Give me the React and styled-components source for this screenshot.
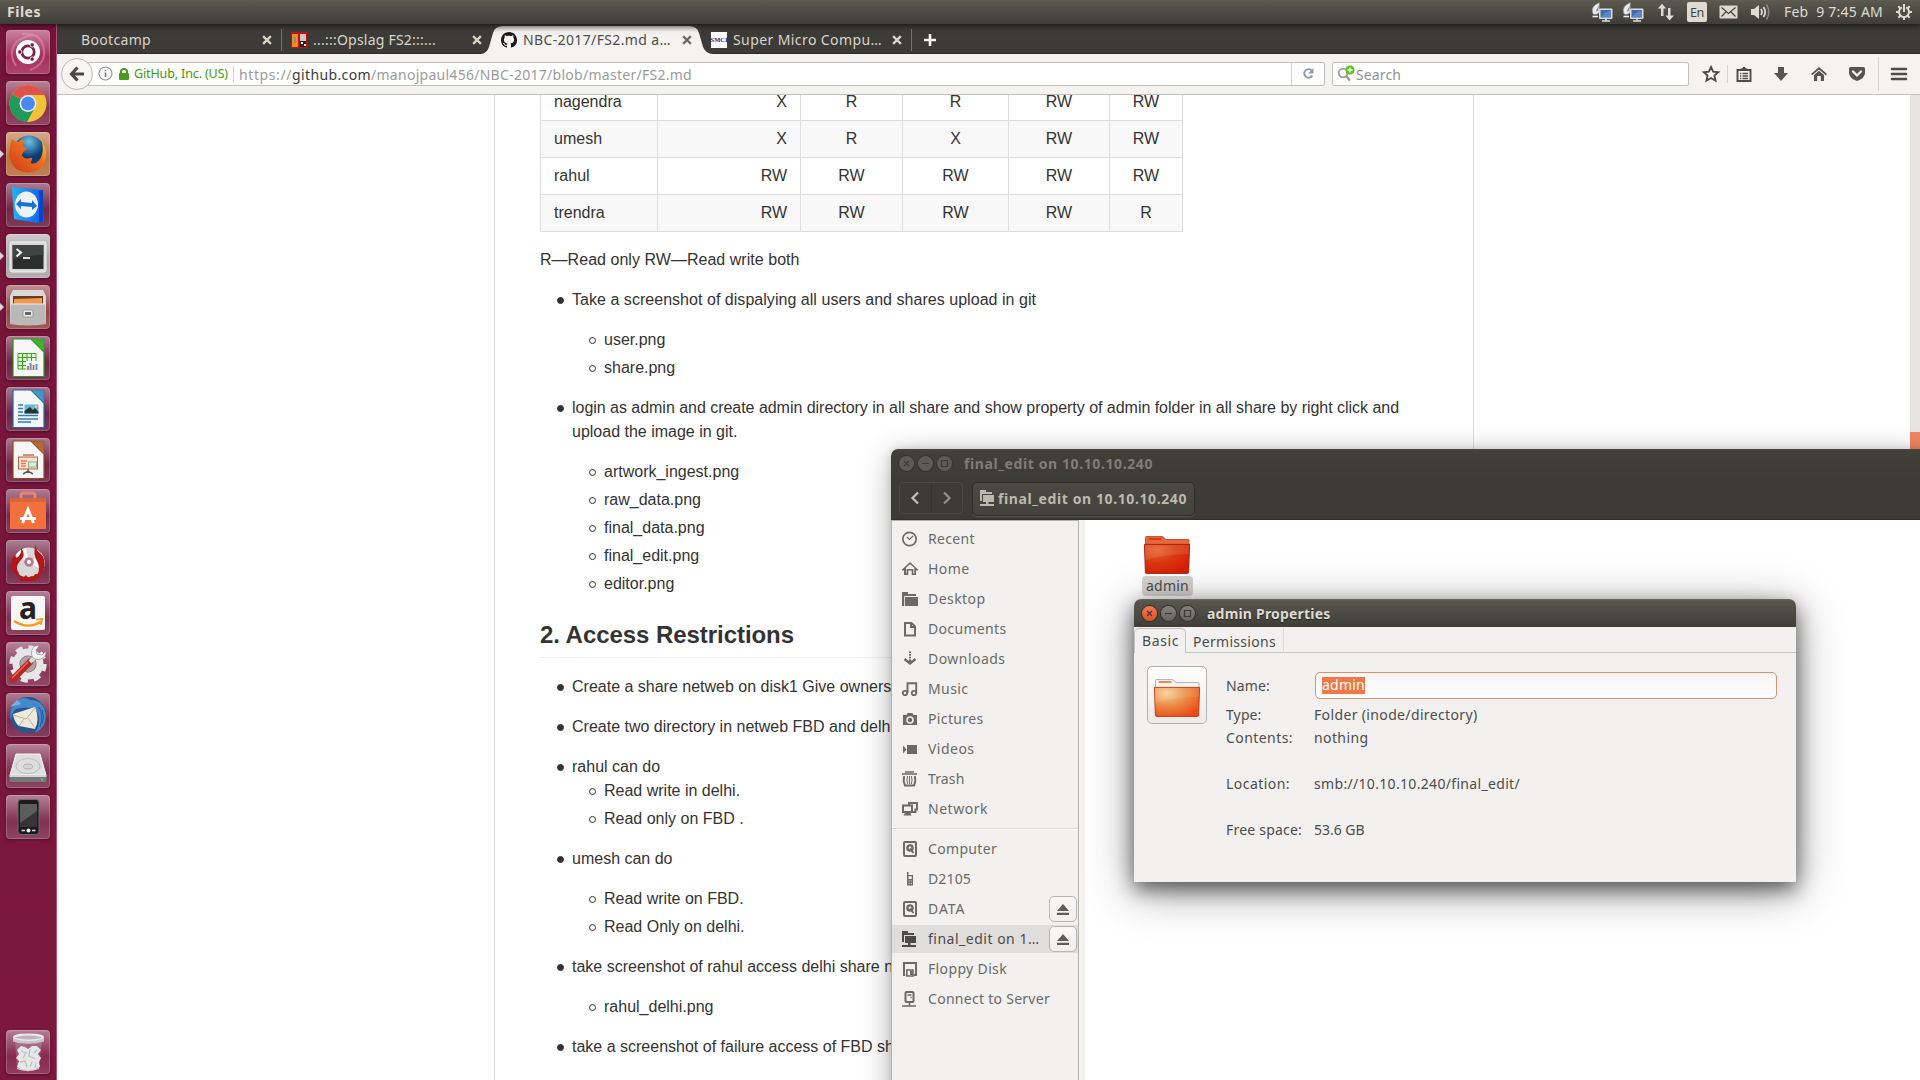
import React, { useLayoutEffect, useRef } from "react";
import styled, { createGlobalStyle, css } from "styled-components";

const ui = '"Noto Sans", "Open Sans", sans-serif';
const doc = '"Liberation Sans", Arial, sans-serif';

const Global = createGlobalStyle`
  *, *::before { box-sizing: border-box; }
  html, body { margin: 0; padding: 0; overflow: hidden; background: #fff; }
  svg { display: block; flex: none; overflow: visible; }
`;

/* Text that is tracked so that it fills a known width. */
const FitText = styled.span`
  display: inline-block;
  white-space: pre;
`;
function Fit({ w, children }) {
  const ref = useRef(null);
  useLayoutEffect(() => {
    const el = ref.current;
    el.style.letterSpacing = "0px";
    const natural = el.getBoundingClientRect().width;
    el.style.letterSpacing = `${(w - natural) / children.length}px`;
  }, [w, children]);
  return <FitText ref={ref}>{children}</FitText>;
}

const Screen = styled.div`
  position: relative;
  width: 1920px;
  height: 1080px;
  overflow: hidden;
  display: flex;
  flex-direction: column;
  font-family: ${ui};
  font-size: 14px;
`;
const Panel = styled.header`
  height: 24px;
  flex: none;
  display: flex;
  align-items: center;
  justify-content: space-between;
  padding: 0 8px 0 7px;
  color: #dfdbd2;
  background: linear-gradient(#5f5c50 0, #5a574e 2px, #3e3d38 100%);
  box-shadow: 0 1px 6px rgba(0, 0, 0, 0.75);
  z-index: 3;
`;
const AppName = styled.div`
  font-weight: 700;
  line-height: 24px;
`;
const Indicators = styled.div`
  display: flex;
  align-items: center;
`;
const Indicator = styled.div`
  width: ${(p) => p.$w}px;
  margin-right: ${(p) => p.$gap}px;
  flex: none;
  line-height: 24px;
`;
const Lang = styled.div`
  width: 20px;
  height: 20px;
  border-radius: 2px;
  background: #dfdbd2;
  color: #45443f;
  font-size: 12.5px;
  line-height: 21px;
  text-align: center;
`;
const Body = styled.div`
  display: flex;
  flex: 1;
  min-height: 0;
`;
const Launcher = styled.nav`
  width: 57px;
  flex: none;
  display: flex;
  flex-direction: column;
  gap: 7px;
  padding: 6px 0 6px 6px;
  border-right: 1px solid #b0527b;
  background: linear-gradient(#75143a, #7b183b);
`;
const Tile = styled.div`
  position: relative;
  width: 44px;
  height: 44px;
  flex: none;
  display: flex;
  align-items: center;
  justify-content: center;
  border-radius: 4px;
  margin-top: ${(p) => (p.$last ? "auto" : 0)};
  background: linear-gradient(rgba(255, 255, 255, 0.42), rgba(255, 255, 255, 0.1) 48%, rgba(255, 255, 255, 0.03) 60%, rgba(255, 255, 255, 0.12)), ${(p) => p.$bg};
  box-shadow: inset 0 0 0 1px rgba(255, 255, 255, 0.2), 0 1px 3px rgba(40, 0, 20, 0.5);
`;
const Running = styled.i`
  position: absolute;
  left: -6px;
  top: 18px;
  border: 4px solid transparent;
  border-left-color: #ddd3d8;
  border-right: 0;
`;

const Browser = styled.main`
  flex: 1;
  min-width: 0;
  display: flex;
  flex-direction: column;
  background: #fff;
`;
const TabStrip = styled.div`
  height: 30px;
  flex: none;
  display: flex;
  padding-left: 14px;
  background: #3c3b37;
  border-bottom: 1px solid #2b2a27;
`;
const Tab = styled.div`
  position: relative;
  width: 210px;
  display: flex;
  align-items: center;
  padding: 3px 9px 0 10px;
  color: ${(p) => (p.$active ? "#4c4c4c" : "#d9d5cc")};
  font-size: 14px;
`;
const TabShape = styled.svg`
  position: absolute;
  left: -10px;
  top: 2px;
`;
const TabSep = styled.i`
  position: absolute;
  right: -1px;
  top: 5px;
  width: 1px;
  height: 22px;
  background: #75736c;
`;
const TabIcon = styled.div`
  position: relative;
  width: 16px;
  height: 16px;
  margin-right: 6px;
`;
const TabTitle = styled.div`
  position: relative;
  flex: 1;
  line-height: 24px;
`;
const CloseMark = styled.svg`
  position: relative;
`;
const Smci = styled.div`
  width: 16px;
  height: 16px;
  display: flex;
  align-items: center;
  justify-content: center;
  background: #fff;
  color: #29248c;
  font: 700 6.5px/12px "Liberation Serif", serif;
  white-space: nowrap;
`;
const PlusBox = styled.div`
  padding: 10px 0 0 13px;
`;
const NavBar = styled.div`
  height: 41px;
  flex: none;
  display: flex;
  align-items: center;
  padding: 0 13px 1px 4px;
  background: #f4f3f1;
  border-bottom: 1px solid #c3c1be;
`;
const BackButton = styled.div`
  width: 32px;
  height: 32px;
  flex: none;
  display: flex;
  align-items: center;
  justify-content: center;
  border: 1px solid #bdbab6;
  border-radius: 50%;
  background: #f7f6f5;
  z-index: 1;
`;
const UrlBar = styled.div`
  height: 24px;
  width: 1237px;
  flex: none;
  margin-left: -5px;
  display: flex;
  align-items: center;
  border: 1px solid #c3c1be;
  background: #fff;
  border-radius: 0 2px 2px 0;
  padding-left: 9px;
`;
const Secure = styled.div`
  color: #45990b;
  font-size: 12.5px;
  line-height: 22px;
  padding-top: 1px;
  margin: 0 5px 0 4px;
`;
const VLine = styled.i`
  width: 1px;
  height: ${(p) => p.$h}px;
  background: #d5d3d0;
  flex: none;
`;
const Url = styled.div`
  margin-left: 5px;
  padding-top: 2px;
  flex: 1;
  line-height: 20px;
  color: #9b9b9b;
  font-size: 14px;
  b { font-weight: 400; color: #3a3a3a; }
`;
const Reload = styled.div`
  width: 33px;
  height: 22px;
  display: flex;
  align-items: center;
  justify-content: center;
  border-left: 1px solid #d5d3d0;
`;
const SearchBox = styled.div`
  width: 357px;
  height: 24px;
  flex: none;
  margin-left: 7px;
  display: flex;
  align-items: center;
  gap: 1px;
  padding-left: 4px;
  border: 1px solid #c3c1be;
  border-radius: 2px;
  background: #fff;
`;
const SearchHint = styled.div`
  padding-top: 2px;
  line-height: 20px;
  color: #929292;
`;
const NavIcons = styled.div`
  flex: 1;
  display: grid;
  grid-template-columns: 32px 1px 31px 44px 32px 43px 1px 1fr;
  align-items: center;
  justify-items: center;
  padding-left: 6px;
  & > :last-child { justify-self: end; }
`;
const PageRow = styled.div`
  flex: 1;
  min-height: 0;
  display: flex;
  justify-content: space-between;
  overflow: hidden;
`;
const Article = styled.article`
  width: 980px;
  height: 1000px;
  margin: -11px 0 0 437px;
  padding: 0 45px;
  border: solid #dddddd;
  border-width: 0 1px;
  font: 16px/24px ${doc};
  color: #333;
`;
const Scroll = styled.div`
  width: 10px;
  padding-top: 337px;
  background: #e6e5e4;
`;
const Thumb = styled.div`
  height: 200px;
  background: #f08763;
`;
const Grid = styled.div`
  width: 643px;
  border-left: 1px solid #ddd;
`;
const GridRow = styled.div`
  display: grid;
  grid-template-columns: 117px 143px 102px 106px 101px 73px;
  background: ${(p) => (p.$alt ? "#f8f8f8" : "#fff")};
`;
const Cell = styled.div`
  height: 37px;
  padding: 6px 13px 5px;
  border: solid #ddd;
  border-width: 0 1px 1px 0;
  text-align: ${(p) => p.$align};
`;
const Para = styled.p`
  margin: 16px 0;
`;
const Bullets = styled.ul`
  margin: 0;
  padding: 0 0 0 32px;
  list-style: none;
`;
const Item = styled.li`
  display: block;
  margin-top: ${(p) => p.$gap}px;
  &::before {
    content: "";
    float: left;
    width: 7px;
    height: 7px;
    margin: 9px 0 0 -15px;
    border-radius: 50%;
    border: 1px solid #333;
    ${(p) => p.$solid && css`background: #333;`}
  }
`;
const Heading = styled.h2`
  margin: 24px 0 17px;
  padding-bottom: 7px;
  font-size: 24px;
  line-height: 30px;
  border-bottom: 1px solid #eee;
`;

const FilesWindow = styled.section`
  position: absolute;
  left: 891px;
  top: 449px;
  width: 1040px;
  height: 640px;
  display: flex;
  flex-direction: column;
  border-radius: 7px 7px 0 0;
  background: #fff;
  overflow: hidden;
`;
const FilesShadow = styled.div`
  position: absolute;
  left: 891px;
  top: 449px;
  width: 1040px;
  height: 700px;
  border-radius: 7px;
  box-shadow: 0 6px 30px rgba(0, 0, 0, 0.3), 0 0 9px rgba(0, 0, 0, 0.15);
`;
const FilesHead = styled.div`
  height: 71px;
  flex: none;
  background: linear-gradient(#464640 0, #403f3a 3px, #3c3b37 30px);
  border-bottom: 1px solid #32312e;
`;
const TitleBar = styled.div`
  height: 29px;
  display: flex;
  align-items: center;
  gap: 4px;
  padding-left: 8px;
  line-height: 28px;
  font-weight: 700;
  color: ${(p) => p.$color};
`;
const WinButton = styled.div`
  width: 15px;
  height: 15px;
  border-radius: 50%;
  background: ${(p) => p.$bg};
  box-shadow: 0 0 0 1px ${(p) => p.$ring};
`;
const TitleText = styled.div`
  margin-left: 8px;
`;
const ToolRow = styled.div`
  display: flex;
  padding: 4px 0 0 8px;
  gap: 9px;
`;
const Arrows = styled.div`
  display: grid;
  grid-template-columns: 31px 31px;
  width: 64px;
  height: 32px;
  border: 1px solid #4b4a45;
  border-radius: 4px;
  & > * + * { border-left: 1px solid #34332f; }
`;
const Arrow = styled.div`
  display: flex;
  align-items: center;
  justify-content: center;
  padding-right: 1px;
`;
const PathButton = styled.div`
  width: 223px;
  height: 34px;
  display: flex;
  align-items: center;
  gap: 4px;
  padding: 0 0 2px 7px;
  border: 1px solid #2d2c29;
  border-radius: 5px;
  background: linear-gradient(#4a4944, #43423d);
  box-shadow: 0 1px 0 #55544f;
  font-weight: 700;
  color: #bdb9ad;
`;
const FilesBody = styled.div`
  flex: 1;
  display: flex;
`;
const Sidebar = styled.aside`
  width: 188px;
  border: solid #b5b2ae;
  border-width: 1px 1px 0 1px;
  background: #f2f1ef;
  padding-top: 4px;
`;
const Gutter = styled.div`
  width: 6px;
  background: #f4f3f2;
`;
const Place = styled.div`
  height: 28px;
  margin-bottom: 2px;
  display: flex;
  align-items: center;
  padding: 0 1px 0 10px;
  color: ${(p) => (p.$on ? "#4a4a4a" : "#6b6a68")};
  background: ${(p) => (p.$on ? "#e0dedd" : "transparent")};
`;
const PlaceIcon = styled.div`
  width: 26px;
`;
const PlaceName = styled.div`
  flex: 1;
  line-height: 26px;
`;
const Rule = styled.div`
  height: 2px;
  margin: 5px 0 5px;
  background: linear-gradient(#dbd9d7 50%, #fff 50%);
`;
const Eject = styled.div`
  width: 28px;
  height: 26px;
  display: flex;
  align-items: center;
  justify-content: center;
  border: 1px solid #b9b6b2;
  border-radius: 5px;
  background: linear-gradient(#f9f8f8, #f0efed);
`;
const Canvas = styled.div`
  flex: 1;
  display: flex;
  align-items: flex-start;
  padding: 16px 0 0 57px;
`;
const FileItem = styled.div`
  width: 51px;
  display: flex;
  flex-direction: column;
  align-items: center;
  & > svg { margin-right: 1px; }
`;
const FileName = styled.div`
  width: 51px;
  height: 20px;
  margin-top: 2px;
  border-radius: 4px;
  background: #d5d3d1;
  color: #4c4c4c;
  line-height: 19px;
  padding-left: 4px;
`;

const Dialog = styled.section`
  position: absolute;
  left: 1134px;
  top: 599px;
  width: 662px;
  height: 283px;
  border-radius: 7px 7px 0 0;
  background: #f2f1ef;
  color: #4c4c4c;
  box-shadow: 0 9px 48px rgba(0, 0, 0, 0.38), 0 7px 20px rgba(0, 0, 0, 0.55);
`;
const DialogTitle = styled(TitleBar)`
  height: 28px;
  border-radius: 7px 7px 0 0;
  background: linear-gradient(#6a675c 0, #59564d 2px, #3e3d38 100%);
  text-shadow: 0 1px 1px #22211f;
  & > :last-child { padding-top: 2px; }
`;
const DialogTabs = styled.div`
  display: flex;
  height: 26px;
  padding-top: 1px;
  border-bottom: 1px solid #c4c1bd;
`;
const DialogTab = styled.div`
  height: 25px;
  ${(p) => p.$on ? css`
    width: 52px;
    padding: 1px 0 0 7px;
    border: 1px solid #c4c1bd;
    border-bottom: 0;
    border-radius: 5px 5px 0 0;
    background: #f2f1ef;
    line-height: 22px;
  ` : css`
    width: 98px;
    padding: 2px 0 0 7px;
    border-right: 1px solid #dddbd8;
    line-height: 24px;
  `}
`;
const DialogBody = styled.div`
  display: flex;
  padding: 13px 19px 0 13px;
`;
const IconButton = styled.div`
  width: 60px;
  height: 58px;
  flex: none;
  display: flex;
  align-items: flex-start;
  justify-content: center;
  padding-top: 12px;
  border: 1px solid #b4b1ad;
  border-radius: 5px;
  background: linear-gradient(#fdfdfd, #ecebe9);
`;
const Fields = styled.div`
  flex: 1;
  display: grid;
  grid-template-columns: 88px 1fr;
  grid-template-rows: 27px 4px repeat(6, 23px);
  padding: 6px 0 0 19px;
  align-items: center;
  line-height: 23px;
`;
const Field = styled.div`
  grid-column: ${(p) => p.$c};
  grid-row: ${(p) => p.$r};
`;
const Entry = styled.div`
  grid-column: 2;
  grid-row: 1;
  height: 27px;
  margin-left: 1px;
  display: flex;
  align-items: center;
  padding-left: 6px;
  border: 1px solid #e0906f;
  border-radius: 5px;
  background: linear-gradient(#f5f5f5, #fff);
`;
const Selected = styled.span`
  height: 17px;
  line-height: 16px;
  background: #f07746;
  color: #fff;
`;

/* ---------- drawings ---------- */

const Cross = ({ c = "#d9d5cc" }) => (
  <CloseMark width="10" height="10" viewBox="0 0 10 10">
    <path d="M2 2L8 8M8 2L2 8" stroke={c} strokeWidth="2.4" strokeLinecap="square" />
  </CloseMark>
);

const Folder = ({ id, body, tab, edge }) => (
  <svg width="46" height="38" viewBox="0 0 46 38">
    <defs>
      <radialGradient id={id} cx=".28" cy=".2" r=".9">
        <stop offset="0" stopColor={body[0]} />
        <stop offset=".5" stopColor={body[1]} />
        <stop offset="1" stopColor={body[2]} />
      </radialGradient>
    </defs>
    <path d="M1.5 10V1.2Q1.5.5 2.2.5H18.6L22 3.5H44.5Q45 3.5 45 4V10Z" fill={tab} stroke={edge} strokeWidth=".8" />
    <rect x="4.5" y="2" width="13" height="2" rx="1" fill={body[1]} />
    <path d="M.4 8.4H45.6L44.6 36.4Q44.5 37.4 43.5 37.4H2.6Q1.5 37.4 1.4 36.4Z" fill={`url(#${id})`} stroke={body[3]} strokeWidth=".9" />
    <path d="M1 9H45L44.7 18Q18 18 1.2 24.5Z" fill="#fff" opacity=".1" />
  </svg>
);

const Dish = () => (
  <svg width="22" height="20" viewBox="0 0 22 20">
    <path d="M8.500 .500Q-.5 4 1.500 11Q3 14 8 11Z" fill="#ececec" stroke="#777" strokeWidth=".6" />
    <path d="M4.500 9.500L8 3L7 9Z" fill="#8e8e8e" />
    <path d="M1.500 14.500H7" stroke="#eee" strokeWidth="1.600" />
    <rect x="8" y="6.500" width="13.500" height="10.500" rx="1" fill="#ddd" />
    <rect x="9.500" y="8" width="10.500" height="7.500" fill="#3f6eb0" />
    <path d="M9.500 15.500Q15 9 20 8.500V15.500Z" fill="#7aa3dc" opacity=".5" />
    <path d="M11 19H19M15 17V19" stroke="#ddd" strokeWidth="1.600" />
  </svg>
);

const placeIcons = {
  Recent: <><circle cx="7.5" cy="8" r="6.7" fill="none" stroke="currentColor" strokeWidth="1.7" /><path d="M4.8 6L7.5 8.4L11 5" fill="none" stroke="currentColor" strokeWidth="1.2" /></>,
  Home: <path d="M0 8.4L8 1L16 8.4V9.4H14V14H9.7V9.5H6.3V14H2V9.4H0ZM4 12.5H4.6V8H11.4V12.5H12.3V6.8L8 3.2L4 6.8Z" fill="currentColor" fillRule="evenodd" />,
  Desktop: <path d="M0 1H6V3H14V5H2.2V15H0ZM3 6H16V15H3Z" fill="currentColor" />,
  Documents: <path d="M3 2H9.5L13 5.5V14.5H3ZM9 2V6H13" fill="none" stroke="currentColor" strokeWidth="2" />,
  Downloads: <><path d="M8 .5V8.5" stroke="currentColor" strokeWidth="2" strokeDasharray="1.6 1" /><path d="M2.5 8L8 12.5L13.5 8M8 8.5V12.5" fill="none" stroke="currentColor" strokeWidth="2.3" /></>,
  Music: <><circle cx="3" cy="12" r="2.2" fill="none" stroke="currentColor" strokeWidth="1.8" /><circle cx="12" cy="12" r="2.2" fill="none" stroke="currentColor" strokeWidth="1.8" /><path d="M5.5 12V2.2H14.2V12" fill="none" stroke="currentColor" strokeWidth="1.9" /></>,
  Pictures: <><path d="M1 4H4.5L5.5 2H10.5L11.5 4H15V14H1Z" fill="currentColor" /><circle cx="8" cy="9" r="3" fill="none" stroke="#f2f1ef" strokeWidth="1.6" /></>,
  Videos: <path d="M1 4.5L4.5 8.5L1 12.5ZM5 4H15V13H5Z" fill="currentColor" />,
  Trash: <><path d="M3 1H12M0 3H15" stroke="currentColor" strokeWidth="1.7" /><path d="M2.200 5Q.800 10 3 14.500H12Q14.200 10 12.800 5" fill="none" stroke="currentColor" strokeWidth="1.900" /><path d="M5.600 5Q4.300 9 5.600 13M7.500 5V13M9.400 5Q10.700 9 9.400 13" fill="none" stroke="currentColor" strokeWidth="1" /></>,
  Network: <><path d="M7 4V2H15V8.5H12.5M13.5 9V11H11" fill="none" stroke="currentColor" strokeWidth="1.9" /><rect x="1" y="4.5" width="9" height="6.5" fill="none" stroke="currentColor" strokeWidth="2" /><path d="M3.5 11H8L9.5 14.5H1.5Z" fill="currentColor" /></>,
  Disk: <><rect x="2" y="1" width="12" height="14" rx="1" fill="none" stroke="currentColor" strokeWidth="2" /><circle cx="8" cy="7" r="2.6" fill="none" stroke="currentColor" strokeWidth="2.400" /><path d="M8 7.500L11.500 12" stroke="currentColor" strokeWidth="2" /></>,
  Phone: <path d="M5 1H6.5V4H11V14.5H5ZM6.5 5.3V8H9.7V5.3ZM6.5 9.5H7.6V10.6H6.5ZM8.8 9.5H9.8V10.6H8.8ZM6.5 12H7.6V13H6.5ZM8.8 12H9.8V13H8.8Z" fill="currentColor" fillRule="evenodd" />,
  Share: <path d="M0 0H6V2H12V4H2V11H0ZM3 5H14V12H8.5V14H14V16H0V14H6V12H3Z" fill="currentColor" />,
  Floppy: <><path d="M3.2 14H2V2H14V14H12" fill="none" stroke="currentColor" strokeWidth="2" /><path d="M4.8 9H11V15H4.8Z" fill="none" stroke="currentColor" strokeWidth="1.6" /><path d="M8 10V14H10.5V10Z" fill="currentColor" /></>,
  Server: <><rect x="3.5" y="1" width="8" height="10" rx="1" fill="none" stroke="currentColor" strokeWidth="2" /><path d="M5.5 4H9.5M8.5 6.5H9.7M7.5 11V14.5M0 15H14" stroke="currentColor" strokeWidth="1.6" /></>,
};
const SideIcon = ({ n }) => <svg width="16" height="16" viewBox="0 0 16 16">{placeIcons[n]}</svg>;

const Art = ({ children }) => <svg width="40" height="40" viewBox="0 0 40 40">{children}</svg>;
const Office = ({ c, d, children }) => (
  <Art>
    <path d="M5 1H23L36 14V38.5H5Z" fill="#f6f6f6" stroke={d} strokeWidth="1.2" />
    <path d="M23 1H36V14Z" fill={c} stroke={d} strokeWidth=".5" />
    {children}
  </Art>
);

const apps = [
  { bg: "#a32a56", art: (
    <Art>
      <path d="M8 34Q-2 18 12 7M14 2Q34 0 36 18Q38 32 22 38M30 4Q20 2 12 8" fill="none" stroke="#e8a5bf" strokeWidth="2" opacity=".45" />
      <circle cx="20" cy="20" r="12" fill="#fff" />
      <circle cx="20" cy="20" r="6.2" fill="none" stroke="#7b1f3f" strokeWidth="2.8" />
      <g fill="#7b1f3f" stroke="#fff" strokeWidth=".8"><circle cx="11.8" cy="20" r="2.2" /><circle cx="24.2" cy="12.9" r="2.2" /><circle cx="24.2" cy="27.1" r="2.2" /></g>
    </Art>) },
  { bg: "#872a4c", art: (
    <Art>
      <circle cx="20" cy="20.5" r="18.5" fill="#f3c13a" />
      <path d="M20 20.5L4 11.2A18.5 18.5 0 0 1 36.5 12H20Z" fill="#dd5349" />
      <path d="M20 20.5L4 11.2A18.5 18.5 0 0 0 19 39L27 24.5Z" fill="#209a58" />
      <circle cx="20" cy="20.5" r="8.5" fill="#eef" /><circle cx="20" cy="20.5" r="6.9" fill="#4a89ee" />
    </Art>) },
  { bg: "#b9703c", run: true, art: (
    <Art>
      <defs>
        <radialGradient id="ffb" cx=".5" cy=".2"><stop offset="0" stopColor="#6fc3e8" /><stop offset="1" stopColor="#0d3b73" /></radialGradient>
        <linearGradient id="fff" x1="0" y1="1" x2="1" y2="0"><stop offset="0" stopColor="#cf3918" /><stop offset=".6" stopColor="#ec6d1e" /><stop offset="1" stopColor="#ffd83a" /></linearGradient>
      </defs>
      <circle cx="21" cy="17" r="15.5" fill="url(#ffb)" />
      <path d="M4 5Q7 8 10 8Q14 5 17 6Q14 9 15 12L19 15Q15 17 14 21Q16 26 22 24Q25 23 24 26Q20 31 28 29Q37 23 34 8Q40 17 37 27Q32 39 19 38.5Q4 37 1.5 22Q1 13 4 5Z" fill="url(#fff)" />
    </Art>) },
  { bg: "#6e2040", art: (
    <Art>
      <defs><linearGradient id="tv"><stop offset="0" stopColor="#25b3f8" /><stop offset="1" stopColor="#0b5ce8" /></linearGradient></defs>
      <path d="M4 2L34 5L36 37L30 38L6 34Z" fill="url(#tv)" /><path d="M31 6L35 5V36L31 38Z" fill="#0a43c8" />
      <ellipse cx="18.5" cy="19.5" rx="11.5" ry="13" fill="#eef2f7" />
      <path d="M8 19L13 14V17L24 18V15L29 21L24 25V22L13 21V24Z" fill="#1673d6" />
    </Art>) },
  { bg: "#a9a2a5", run: true, art: (
    <Art>
      <rect x="2" y="6" width="36" height="30" rx="2" fill="#d8d8d6" stroke="#f5f5f5" />
      <rect x="4.5" y="9" width="31" height="24" fill="#2c2e2d" /><path d="M4.5 9H35.5V19Q22 19 4.5 23Z" fill="#555" opacity=".55" />
      <path d="M8.5 13L13 16.5L8.5 20.5" fill="none" stroke="#f3f3f3" strokeWidth="2" /><path d="M15 22H22" stroke="#f3f3f3" strokeWidth="1.8" />
    </Art>) },
  { bg: "#934045", run: true, art: (
    <Art>
      <path d="M5 3H35L38 9V35H2V9Z" fill="#d9d9d7" /><rect x="5" y="9" width="30" height="8" fill="#6b3a20" />
      <path d="M6 12L34 11V17H6Z" fill="#f09a4c" />
      <path d="M3 17H37L38 37Q20 40 2 37Z" fill="#b9b9b7" /><path d="M3 17H37" stroke="#eee" />
      <rect x="15" y="23" width="10" height="7" rx="1.5" fill="#e9e9e9" stroke="#888" strokeWidth=".8" /><rect x="17" y="25" width="6" height="3" fill="#666" />
    </Art>) },
  { bg: "#6d1b40", art: (
    <Office c="#43b02a" d="#1c9a1c"><path d="M10 15.5H28V31H10ZM10 19.5H28M10 23.5H28M10 27.5H28M14.5 15.5V31M19 15.5V31M23.5 15.5V31" fill="#e8f7e2" stroke="#35a81f" /><rect x="18" y="23" width="12" height="9" fill="#fff" /><path d="M20 32V28M25.500 32V27" stroke="#d8745a" strokeWidth="2" /><path d="M22.6 32V25M28.5 32V26" stroke="#4a9bd0" strokeWidth="2" /></Office>) },
  { bg: "#6d1b40", art: (
    <Office c="#4793c8" d="#1a6aa3"><path d="M10 16H15M10 19.5H15M10 23H15M10 26.5H30M10 30H30M10 33H23" stroke="#2c7eb8" strokeWidth="1.5" /><rect x="16.5" y="15.5" width="14" height="9" fill="#6ab2e0" /><path d="M16.5 24.5V22L22 18L25 21L27 19L30.500 23V24.5Z" fill="#26352a" /><circle cx="28" cy="17.500" r="1.200" fill="#ffd75a" /></Office>) },
  { bg: "#6d1b40", art: (
    <Office c="#b3673b" d="#90491f"><path d="M15 15H26" stroke="#b7532b" strokeWidth="1.2" /><rect x="10.500" y="17" width="19" height="12" fill="#fae1d6" stroke="#bd5d38" /><path d="M13 21H19M13 23.500H18M13 26H18" stroke="#d9835f" strokeWidth="1.300" /><rect x="20.500" y="22" width="8" height="5" fill="#d9f2dc" stroke="#5c9a60" strokeWidth=".7" /><path d="M20 29V33M15 34L20 31L25 34" fill="none" stroke="#66564d" strokeWidth="1.500" /></Office>) },
  { bg: "#742347", art: (
    <Art>
      <path d="M13 9V4Q13 2 16 2H24Q27 2 27 4V9" fill="none" stroke="#e8836a" strokeWidth="3" />
      <path d="M2 7H38V12H2Z" fill="#d7643a" /><path d="M2 11H38V37Q38 38 37 38H3Q2 38 2 37Z" fill="#f2703a" />
      <path d="M14.500 32L20 18.500L25.500 32M12 27.500H28" fill="none" stroke="#fff" strokeWidth="3" />
    </Art>) },
  { bg: "#742347", art: (
    <Art>
      <circle cx="21" cy="21" r="15.500" fill="#d9d7d8" /><path d="M21 21L33 11A15.500 15.500 0 0 1 35 28ZM21 21L8 13A15.500 15.500 0 0 1 18 6Z" fill="#f7f7f7" />
      <circle cx="21" cy="20" r="4.800" fill="#b67b91" /><circle cx="21" cy="20" r="2" fill="#fff" />
      <path d="M13 6Q19 13 12 19Q7 25 10 30Q11 34 14 35Q4 33 3 24Q3 16 7 13Q8 17 10 15Q14 11 13 6ZM28 2Q27 8 33 12Q38 17 36 26Q34 34 27 37Q33 29 30 21Q24 12 28 2ZM10 29Q11 34 14 34Q16 36 18 33Q20 37 23 34Q26 35 27 32Q31 33 34 26Q34 35 27 39H14Q9 36 10 29Z" fill="#b31616" />
    </Art>) },
  { bg: "#7d2a4c", art: (
    <Art>
      <rect x="3" y="3" width="34" height="34" rx="2" fill="#f7f7f7" />
      <text x="20" y="25.500" textAnchor="middle" fontFamily="Noto Sans, sans-serif" fontWeight="700" fontSize="30" fill="#222">a</text>
      <path d="M6 28Q20 37 33 28.500" fill="none" stroke="#f79a1c" strokeWidth="2.200" /><path d="M28 26.500L34.500 26L32.500 32" fill="none" stroke="#f79a1c" strokeWidth="1.600" />
    </Art>) },
  { bg: "#82304f", art: (
    <Art>
      <circle cx="20" cy="20" r="12" fill="none" stroke="#e6e6e6" strokeWidth="7" /><circle cx="20" cy="20" r="16.500" fill="none" stroke="#e6e6e6" strokeWidth="4.500" strokeDasharray="7 5.960" />
      <circle cx="20" cy="20" r="8" fill="#a8a3a5" />
      <path d="M4.500 35.500L22 18" stroke="#b92520" strokeWidth="6.500" strokeLinecap="round" /><path d="M4 34L20 18" stroke="#ea6b5d" strokeWidth="1.500" />
      <path d="M22 18L29 11" stroke="#dcdcdc" strokeWidth="4" />
      <path d="M27 2Q22 6 24 12Q27 17 33 15Q38 13 38 7L34 11L29 10L28 6L31 2Q29 1 27 2Z" fill="#f2f2f2" stroke="#888" strokeWidth=".6" />
    </Art>) },
  { bg: "#742347", art: (
    <Art>
      <circle cx="20" cy="20" r="18" fill="#28558f" /><path d="M10 5Q17 1 22 5Q36 5 38 20Q38 33 27 38Q34 27 29 16Q20 10 8 14Q3 18 3 26Q0 12 10 5Z" fill="#4389cc" />
      <path d="M31 12Q36 20 32 32M34 15Q37 22 34 29" fill="none" stroke="#235a98" strokeWidth="1" />
      <path d="M5 19L27 12Q32 24 27 34L11 31Q6 27 5 19Z" fill="#eee9dc" /><path d="M5 20L18 24L27 13M11 31L16 24M27 33L20 23" fill="none" stroke="#b3ac98" strokeWidth=".9" /><path d="M9 5L2 12L13 9Z" fill="#7fb2e2" />
    </Art>) },
  { bg: "#7d2a4c", art: (
    <Art>
      <path d="M8 8H32L38 29H2Z" fill="#dededc" stroke="#f5f5f5" /><path d="M1.500 29H38.500V36H1.500Z" fill="#77787a" /><path d="M1.500 29H38.500V31H1.500Z" fill="#d6d6d6" />
      <ellipse cx="20" cy="20" rx="12" ry="7.500" fill="none" stroke="#bbb" /><ellipse cx="20" cy="20.500" rx="4.500" ry="2.500" fill="#d4d4d4" stroke="#a5a5a5" strokeWidth=".8" /><circle cx="34" cy="33.500" r="1" fill="#6be05a" />
    </Art>) },
  { bg: "#7d2a4c", art: (
    <Art>
      <rect x="10" y="2.500" width="21" height="35" rx="3" fill="#1b1b1b" stroke="#6a6a6a" /><rect x="12" y="7" width="17" height="23" fill="#353535" /><path d="M12 7H29V14L12 26Z" fill="#5c5c5c" />
      <circle cx="20.500" cy="33.500" r="2" fill="#eee" /><path d="M13.500 33.500H17M24 33.500H27.500" stroke="#ddd" strokeWidth="1.500" />
    </Art>) },
];
const trash = (
  <Art>
    <path d="M7 9L9 37Q20 41 31 37L34 9Z" fill="#fff" opacity=".16" />
    <path d="M9 18L13 14L17 15L20 17L24 14L29 14L33 18L30 22L33 26L31 30L32 35L26 38L14 38L9 35L11 29L8 26L11 22Z" fill="#e4e7e6" />
    <path d="M13 19L18 21L15 26M22 17L21 24L27 27M29 18L26 21M12 30L17 29L19 35M24 30L22 35M28 31L27 36" fill="none" stroke="#bcc1c0" strokeWidth="1.300" />
    <ellipse cx="20.500" cy="5.500" rx="14.500" ry="3" fill="#bdb3b8" stroke="#e9e9e9" strokeWidth="2.200" /><path d="M5 6.500V9.500Q20.500 14 36 9.500V6.500Q20.500 11.500 5 6.500Z" fill="#c6c6c6" />
    <path d="M9 36.500Q20 40.500 31 36.500" fill="none" stroke="#cfcfcf" strokeWidth="1.300" />
  </Art>
);

const table = [
  ["nagendra", "X", "R", "R", "RW", "RW"],
  ["umesh", "X", "R", "X", "RW", "RW"],
  ["rahul", "RW", "RW", "RW", "RW", "RW"],
  ["trendra", "RW", "RW", "RW", "RW", "R"],
];
const aligns = ["left", "right", "center", "center", "center", "center"];

const SubList = ({ items, gap = 16 }) => (
  <Bullets>
    {items.map((t, i) => <Item key={t} $gap={i ? 4 : gap}>{t}</Item>)}
  </Bullets>
);

const placesTop = [["Recent", 47], ["Home", 41.5], ["Desktop", 57.5], ["Documents", 78.5], ["Downloads", 77.5], ["Music", 40.5], ["Pictures", 55.5], ["Videos", 46.5], ["Trash", 36.5], ["Network", 60]];
const placesBottom = [
  { n: "Computer", i: "Disk", w: 69 },
  { n: "D2105", i: "Phone", w: 43 },
  { n: "DATA", i: "Disk", w: 37.5, eject: true },
  { n: "final_edit on 1…", i: "Share", w: 111.5, eject: true, on: true },
  { n: "Floppy Disk", i: "Floppy", w: 79 },
  { n: "Connect to Server", i: "Server", w: 122 },
];
const fields = [
  ["Type:", 35.5, "Folder (inode/directory)", 163.5, 3],
  ["Contents:", 67, "nothing", 54.5, 4],
  ["Location:", 64, "smb://10.10.10.240/final_edit/", 206, 6],
  ["Free space:", 76, "53.6 GB", 50.5, 8],
];

const WinButtons = ({ active }) => {
  const ink = active ? "#3a3935" : "#3c3b37";
  const glyphs = ["M5 5L10 10M10 5L5 10", "M4 7.5H11", "M4.500 4.500H10.500V10.500H4.500Z"];
  return glyphs.map((d, i) => (
    <WinButton
      key={d}
      $bg={!active ? "#5d5b55" : i === 0 ? "linear-gradient(#f47b53,#dd4f24)" : "linear-gradient(#86847c,#65635c)"}
      $ring={active ? "#33322e" : "#363531"}
    >
      <svg width="15" height="15" viewBox="0 0 15 15"><path d={d} fill="none" stroke={ink} strokeWidth="1.200" /></svg>
    </WinButton>
  ));
};

export default function App() {
  return (
    <Screen>
      <Global />
      <Panel>
        <AppName><Fit w={34}>Files</Fit></AppName>
        <Indicators>
          <Indicator $w={22} $gap={9}><Dish /></Indicator>
          <Indicator $w={22} $gap={13}><Dish /></Indicator>
          <Indicator $w={18} $gap={12}>
            <svg width="18" height="18" viewBox="0 0 18 18"><path d="M4 13V5.500H.800L5 .800L9.200 5.500H6.500V13ZM11 5H13.500V12.500H17L12.500 17.500L8.500 12.500H11Z" fill="#dfdbd2" /></svg>
          </Indicator>
          <Indicator $w={20} $gap={12}><Lang><Fit w={14}>En</Fit></Lang></Indicator>
          <Indicator $w={19} $gap={13}>
            <svg width="19" height="14" viewBox="0 0 19 14"><rect x=".5" y=".5" width="18" height="13" rx="1" fill="#dfdbd2" /><path d="M2.500 2.500L9.500 8.500L16.500 2.500M2.500 11.500L7 7M16.500 11.500L12 7" fill="none" stroke="#45443f" strokeWidth="1.200" /></svg>
          </Indicator>
          <Indicator $w={20} $gap={13}>
            <svg width="20" height="18" viewBox="0 0 20 18"><path d="M0 6H3L8 2V16L3 12H0Z" fill="#dfdbd2" /><path d="M10 6Q12 9 10 12M12.500 4Q16 9 12.500 14" fill="none" stroke="#dfdbd2" strokeWidth="1.700" /><path d="M15.500 1.500Q20 9 15.500 16.500" fill="none" stroke="#8b887f" strokeWidth="1.500" /></svg>
          </Indicator>
          <Indicator $w={99} $gap={13}><Fit w={99}>Feb  9 7:45 AM</Fit></Indicator>
          <Indicator $w={16} $gap={0}>
            <svg width="16" height="16" viewBox="0 0 16 16"><path d="M6 3.400A5 5 0 1 0 10 3.400M8 0V8" fill="none" stroke="#dfdbd2" strokeWidth="2" /><path d="M0 8H3M13 8H16M2.300 2.300L4.400 4.400M13.700 2.300L11.600 4.400M2.300 13.700L4.400 11.600M13.700 13.700L11.600 11.600M8 13V16" stroke="#dfdbd2" strokeWidth="2" /></svg>
          </Indicator>
        </Indicators>
      </Panel>

      <Body>
        <Launcher>
          {apps.map((a, i) => (
            <Tile key={i} $bg={a.bg}>{a.run && <Running />}{a.art}</Tile>
          ))}
          <Tile $bg="#82234a" $last>{trash}</Tile>
        </Launcher>

        <Browser>
          <TabStrip>
            <Tab><TabTitle><Fit w={70}>Bootcamp</Fit></TabTitle><Cross /><TabSep /></Tab>
            <Tab>
              <TabIcon>
                <svg width="16" height="16" viewBox="0 0 16 16"><rect width="16" height="16" fill="#c50f0f" /><rect x="1" y="2" width="6" height="13" fill="#f58a1f" /><rect x="3" y="5" width="2" height="6" fill="#8c8c8c" /><rect x="9" y="2" width="6" height="7" fill="#c9c9c9" /><rect x="9" y="9" width="6" height="6" fill="#222" /><path d="M10 10H12V12H10ZM13 12H15V14H13Z" fill="#eee" /></svg>
              </TabIcon>
              <TabTitle><Fit w={123}>...:::Opslag FS2:::...</Fit></TabTitle><Cross />
            </Tab>
            <Tab $active>
              <TabShape width="238" height="28" viewBox="0 0 238 28">
                <defs><linearGradient id="tabg" x1="0" y1="0" x2="0" y2="1"><stop offset="0" stopColor="#bdbcb9" /><stop offset=".2" stopColor="#efeeec" /><stop offset=".4" stopColor="#f4f3f1" /></linearGradient></defs>
                <path d="M0 28Q6 27 8 21L12 7Q14 0 22 0H208Q216 0 218 7L222 21Q225 28 232 28Z" fill="url(#tabg)" />
              </TabShape>
              <TabIcon>
                <svg width="16" height="16" viewBox="0 0 16 16"><path fill="#1b1817" d="M8 0C3.580 0 0 3.580 0 8c0 3.540 2.290 6.530 5.470 7.590.4.070.55-.17.55-.38 0-.19-.01-.82-.01-1.490-2.010.37-2.530-.49-2.690-.94-.09-.23-.48-.94-.82-1.130-.28-.15-.68-.52-.01-.53.63-.01 1.080.58 1.230.82.72 1.210 1.870.87 2.330.66.07-.52.28-.87.51-1.070-1.780-.2-3.640-.89-3.640-3.950 0-.87.31-1.590.82-2.150-.08-.2-.36-1.020.08-2.120 0 0 .67-.21 2.200.82.64-.18 1.320-.27 2-.27s1.360.09 2 .27c1.530-1.040 2.200-.82 2.200-.82.44 1.100.16 1.920.08 2.120.51.56.82 1.270.82 2.150 0 3.070-1.870 3.750-3.650 3.950.29.25.54.73.54 1.480 0 1.070-.01 1.930-.01 2.200 0 .21.15.46.55.38A8.010 8.010 0 0 0 16 8c0-4.420-3.580-8-8-8z" /></svg>
              </TabIcon>
              <TabTitle><Fit w={148}>NBC-2017/FS2.md a…</Fit></TabTitle><Cross c="#6b6b69" />
            </Tab>
            <Tab>
              <TabIcon><Smci>SMCI</Smci></TabIcon>
              <TabTitle><Fit w={149}>Super Micro Compu…</Fit></TabTitle><Cross /><TabSep />
            </Tab>
            <PlusBox><svg width="12" height="12" viewBox="0 0 12 12"><path d="M6 0V12M0 6H12" stroke="#f4f3f1" strokeWidth="2.600" /></svg></PlusBox>
          </TabStrip>
          <NavBar>
            <BackButton><svg width="16" height="16" viewBox="0 0 16 16"><path d="M8.500 1.500L2.500 8L8.500 14.500M3 8H15" fill="none" stroke="#4a4a48" strokeWidth="3.200" /></svg></BackButton>
            <UrlBar>
              <svg width="15" height="15" viewBox="0 0 15 15"><circle cx="7.500" cy="7.500" r="6.500" fill="none" stroke="#8f8f8f" strokeWidth="1.100" /><path d="M7.500 6.500V11M7.500 3.700V5.200" stroke="#777" strokeWidth="1.600" /></svg>
              <svg width="17" height="14" viewBox="0 0 17 14"><rect x="6" y="6" width="10" height="7" rx="1" fill="#4a9a22" /><path d="M8 7V4.500Q8 2 11 2Q14 2 14 4.500V7" fill="none" stroke="#4a9a22" strokeWidth="2" /></svg>
              <Secure><Fit w={94}>GitHub, Inc. (US)</Fit></Secure>
              <VLine $h={16} />
              <Url><Fit w={53}>https://</Fit><b><Fit w={79}>github.com</Fit></b><Fit w={321}>/manojpaul456/NBC-2017/blob/master/FS2.md</Fit></Url>
              <Reload><svg width="14" height="14" viewBox="0 0 14 14"><path d="M11 3.800A4.300 4.300 0 1 0 11.300 8.500" fill="none" stroke="#8c9bab" strokeWidth="1.900" /><path d="M12.500 1V6.500H7Z" fill="#8c9bab" /></svg></Reload>
            </UrlBar>
            <SearchBox>
              <svg width="18" height="18" viewBox="0 0 18 18"><circle cx="6" cy="8" r="4.300" fill="none" stroke="#999" strokeWidth="1.800" /><path d="M9 11L13 15.500" stroke="#999" strokeWidth="2.400" /><circle cx="13" cy="5" r="4.600" fill="#5fbf1b" /><path d="M13 2.500V7.500M10.500 5H15.500" stroke="#fff" strokeWidth="1.300" /></svg>
              <SearchHint><Fit w={45}>Search</Fit></SearchHint>
            </SearchBox>
            <NavIcons>
              <svg width="18" height="18" viewBox="0 0 18 18"><path d="M9 2L11.100 6.700L16.200 7.200L12.400 10.600L13.500 15.600L9 13L4.500 15.600L5.600 10.600L1.800 7.200L6.900 6.700Z" fill="#fff" stroke="#4c4c4a" strokeWidth="1.900" /></svg>
              <VLine $h={18} />
              <svg width="16" height="16" viewBox="0 0 16 16"><path d="M1.500 4H14.500V15H1.500Z" fill="#f4f3f1" stroke="#4c4c4a" strokeWidth="1.900" /><path d="M4.500 4.500V3H6Q8-.5 10 3H11.500V4.500Z" fill="#4c4c4a" stroke="#4c4c4a" /><path d="M4 7.500H5.300M6.500 7.500H12M4 10H5.300M6.500 10H12M4 12.500H5.300M6.500 12.500H12" stroke="#4c4c4a" strokeWidth="1.300" /></svg>
              <svg width="16" height="16" viewBox="0 0 16 16"><path d="M5 1H11V7H15L8 15L1 7H5Z" fill="#555553" /></svg>
              <svg width="16" height="16" viewBox="0 0 16 16"><path d="M0 8L8 1L16 8L14.800 9.300L8 3.500L1.200 9.300ZM3 9L8 4.700L13 9V15H9.800V10H6.200V15H3Z" fill="#555553" /></svg>
              <svg width="16" height="16" viewBox="0 0 16 16"><path d="M1.500 1H14.500Q16 1 16 2.500V7Q16 12 8 15Q0 12 0 7V2.500Q0 1 1.500 1Z" fill="#555553" /><path d="M4 5.500L8 9.500L12 5.500" fill="none" stroke="#f4f3f1" strokeWidth="2.200" strokeLinecap="round" /></svg>
              <VLine $h={34} />
              <svg width="16" height="14" viewBox="0 0 16 14"><path d="M1 2H15M1 7H15M1 12H15" stroke="#4c4c4a" strokeWidth="2.600" strokeLinecap="round" /></svg>
            </NavIcons>
          </NavBar>
          <PageRow>
            <Article>
              <Grid>
                {table.map((r, i) => (
                  <GridRow key={r[0]} $alt={i % 2 === 1}>
                    {r.map((c, j) => <Cell key={j} $align={aligns[j]}>{c}</Cell>)}
                  </GridRow>
                ))}
              </Grid>
              <Para><Fit w={259.5}>R—Read only RW—Read write both</Fit></Para>
              <Bullets>
                <Item $solid $gap={0}><Fit w={464}>Take a screenshot of dispalying all users and shares upload in git</Fit>
                  <SubList items={["user.png", "share.png"]} />
                </Item>
                <Item $solid $gap={16}><Fit w={827}>login as admin and create admin directory in all share and show property of admin folder in all share by right click and</Fit><br />upload the image in git.
                  <SubList items={["artwork_ingest.png", "raw_data.png", "final_data.png", "final_edit.png", "editor.png"]} />
                </Item>
              </Bullets>
              <Heading><Fit w={254}>2. Access Restrictions</Fit></Heading>
              <Bullets>
                <Item $solid $gap={0}>Create a share netweb on disk1 Give ownership</Item>
                <Item $solid $gap={16}>Create two directory in netweb FBD and delhi</Item>
                <Item $solid $gap={16}>rahul can do<SubList gap={0} items={["Read write in delhi.", "Read only on FBD ."]} /></Item>
                <Item $solid $gap={16}>umesh can do<SubList items={["Read write on FBD.", "Read Only on delhi."]} /></Item>
                <Item $solid $gap={16}>take screenshot of rahul access delhi share n<SubList items={["rahul_delhi.png"]} /></Item>
                <Item $solid $gap={16}>take a screenshot of failure access of FBD sh</Item>
              </Bullets>
            </Article>
            <Scroll><Thumb /></Scroll>
          </PageRow>
        </Browser>
      </Body>

      <FilesShadow />
      <FilesWindow>
        <FilesHead>
          <TitleBar $color="#807d76"><WinButtons /><TitleText><Fit w={189}>final_edit on 10.10.10.240</Fit></TitleText></TitleBar>
          <ToolRow>
            <Arrows>
              <Arrow><svg width="10" height="14" viewBox="0 0 10 14"><path d="M8 1.500L2.500 7L8 12.500" fill="none" stroke="#c4c0b4" strokeWidth="2.200" /></svg></Arrow>
              <Arrow><svg width="10" height="14" viewBox="0 0 10 14"><path d="M2 1.500L7.500 7L2 12.500" fill="none" stroke="#918e85" strokeWidth="2.200" /></svg></Arrow>
            </Arrows>
            <PathButton>
              <svg width="14" height="16" viewBox="0 0 14 16">{placeIcons.Share}</svg>
              <Fit w={189}>final_edit on 10.10.10.240</Fit>
            </PathButton>
          </ToolRow>
        </FilesHead>
        <FilesBody>
          <Sidebar>
            {placesTop.map(([n, w]) => (
              <Place key={n}><PlaceIcon><SideIcon n={n} /></PlaceIcon><PlaceName><Fit w={w}>{n}</Fit></PlaceName></Place>
            ))}
            <Rule />
            {placesBottom.map((p) => (
              <Place key={p.n} $on={p.on}>
                <PlaceIcon><SideIcon n={p.i} /></PlaceIcon>
                <PlaceName><Fit w={p.w}>{p.n}</Fit></PlaceName>
                {p.eject && <Eject><svg width="12" height="11" viewBox="0 0 12 11"><path d="M6 0L12 7H0ZM0 8.800H12V11H0Z" fill="#5e5d5b" /></svg></Eject>}
              </Place>
            ))}
          </Sidebar>
          <Gutter />
          <Canvas>
            <FileItem>
              <Folder id="fsel" body={["#e8602c", "#d9380f", "#d81c06", "#9e1c08"]} tab="#e4693f" edge="#b5431d" />
              <FileName><Fit w={43}>admin</Fit></FileName>
            </FileItem>
          </Canvas>
        </FilesBody>
      </FilesWindow>

      <Dialog>
        <DialogTitle $color="#dfdbd2"><WinButtons active /><TitleText><Fit w={123.5}>admin Properties</Fit></TitleText></DialogTitle>
        <DialogTabs>
          <DialogTab $on><Fit w={37}>Basic</Fit></DialogTab>
          <DialogTab><Fit w={83}>Permissions</Fit></DialogTab>
        </DialogTabs>
        <DialogBody>
          <IconButton><Folder id="fbig" body={["#f6cf92", "#ec8a45", "#ea4a14", "#b9380f"]} tab="#f3f2f1" edge="#a9a6a2" /></IconButton>
          <Fields>
            <Field $c={1} $r={1}><Fit w={44}>Name:</Fit></Field>
            <Entry><Selected><Fit w={43}>admin</Fit></Selected></Entry>
            {fields.map(([l, lw, v, vw, r]) => (
              <React.Fragment key={l}>
                <Field $c={1} $r={r}><Fit w={lw}>{l}</Fit></Field>
                <Field $c={2} $r={r}><Fit w={vw}>{v}</Fit></Field>
              </React.Fragment>
            ))}
          </Fields>
        </DialogBody>
      </Dialog>
    </Screen>
  );
}
